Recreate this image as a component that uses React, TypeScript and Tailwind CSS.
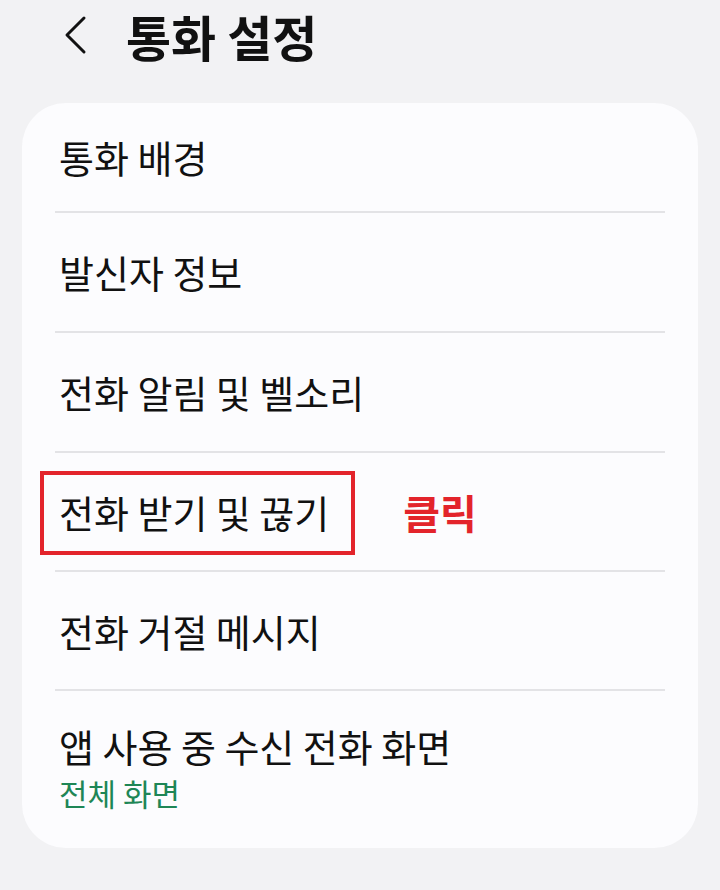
import React from "react";

const font = { fontFamily: '"Noto Sans CJK KR", "Noto Sans", sans-serif' };

function Divider() {
  return <div className="h-[2px] bg-[#e3e3e6]" />;
}

function Row({ label, height }: { label: string; height: string }) {
  return (
    <div className={`flex items-center pl-[4px] ${height}`}>
      <span className="text-[38px] leading-none text-[#111111]">{label}</span>
    </div>
  );
}

export default function App() {
  return (
    <div className="w-[720px] h-[890px] bg-[#f2f2f4] overflow-hidden" style={font}>
      <header className="h-[70px] flex items-center">
        <svg className="ml-[62px] w-[26px] h-[40px]" viewBox="0 0 26 40" fill="none">
          <path d="M22 3 L5 20 L22 37" stroke="#111" strokeWidth="3" strokeLinecap="round" strokeLinejoin="round" />
        </svg>
        <h1 className="ml-[38px] text-[49px] font-bold leading-none text-[#111111]">통화 설정</h1>
      </header>

      <div className="mt-[33px] mx-[22px] bg-[#fcfcfe] rounded-[44px] px-[33px]">
        <div className="flex items-end pl-[4px] h-[108px] pb-[35px]">
          <span className="text-[38px] leading-none text-[#111111]">통화 배경</span>
        </div>
        <Divider />
        <Row label="발신자 정보" height="h-[118px]" />
        <Divider />
        <Row label="전화 알림 및 벨소리" height="h-[118px]" />
        <Divider />
        <div className="relative flex items-center pl-[4px] h-[117px]">
          <span className="text-[38px] leading-none text-[#111111]">전화 받기 및 끊기</span>
          <div className="absolute left-[-15px] top-[18px] w-[315px] h-[84px] border-[4px] border-[#e3242b]" />
          <span className="ml-[74px] text-[40px] font-bold leading-none text-[#e3242b]">클릭</span>
        </div>
        <Divider />
        <Row label="전화 거절 메시지" height="h-[117px]" />
        <Divider />
        <div className="h-[157px] pl-[4px] pt-[36px]">
          <div className="text-[38px] leading-none text-[#111111]">앱 사용 중 수신 전화 화면</div>
          <div className="mt-[12px] text-[31px] leading-none text-[#1e8656]">전체 화면</div>
        </div>
      </div>
    </div>
  );
}
